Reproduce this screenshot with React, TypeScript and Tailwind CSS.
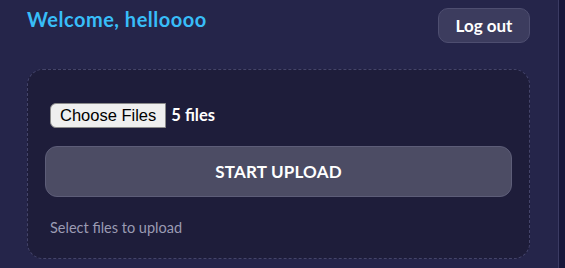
export default function App() {
  return (
    <div className="flex h-[268px] w-[565px] overflow-hidden bg-[#17173a] font-['Lato',sans-serif]">
      <div className="flex w-[559px] shrink-0 flex-col border-r border-[#3b3b63] bg-[#25254a] pl-[27px] pr-[28px]">
        <header className="flex items-start justify-between pt-[7px]">
          <h1 className="text-[20px] font-bold leading-[24px] tracking-[0.5px] text-[#38bdf8]">Welcome, helloooo</h1>
          <button className="mt-px h-[35px] w-[92px] rounded-[10px] border border-[#4e4e70] bg-[#3c3c5e] text-[17px] font-bold text-white">
            Log out
          </button>
        </header>

        <div className="mt-[26px] h-[190px] rounded-[16px] border border-dashed border-[#44446a] bg-[#1e1d3a] px-[17px] pt-[33px]">
          <div className="flex items-center px-[5px]">
            <span className="flex h-[25px] items-center rounded-l-[6px] border border-[#8a8a8a] bg-[#efefef] px-[9px] font-['Liberation_Sans',sans-serif] text-[16.5px] text-black">
              Choose Files
            </span>
            <span className="ml-[5px] text-[16.5px] font-bold text-white">5 files</span>
          </div>

          <button className="mt-[18px] h-[51px] w-full rounded-[12px] border border-[#5d5d78] bg-[#4c4c64] text-[17px] font-bold tracking-[0.2px] text-white">
            START UPLOAD
          </button>

          <p className="mt-[20px] px-[5px] text-[14.5px] text-[#9b9bb3]">Select files to upload</p>
        </div>
      </div>
      <div className="flex-1" />
    </div>
  );
}
